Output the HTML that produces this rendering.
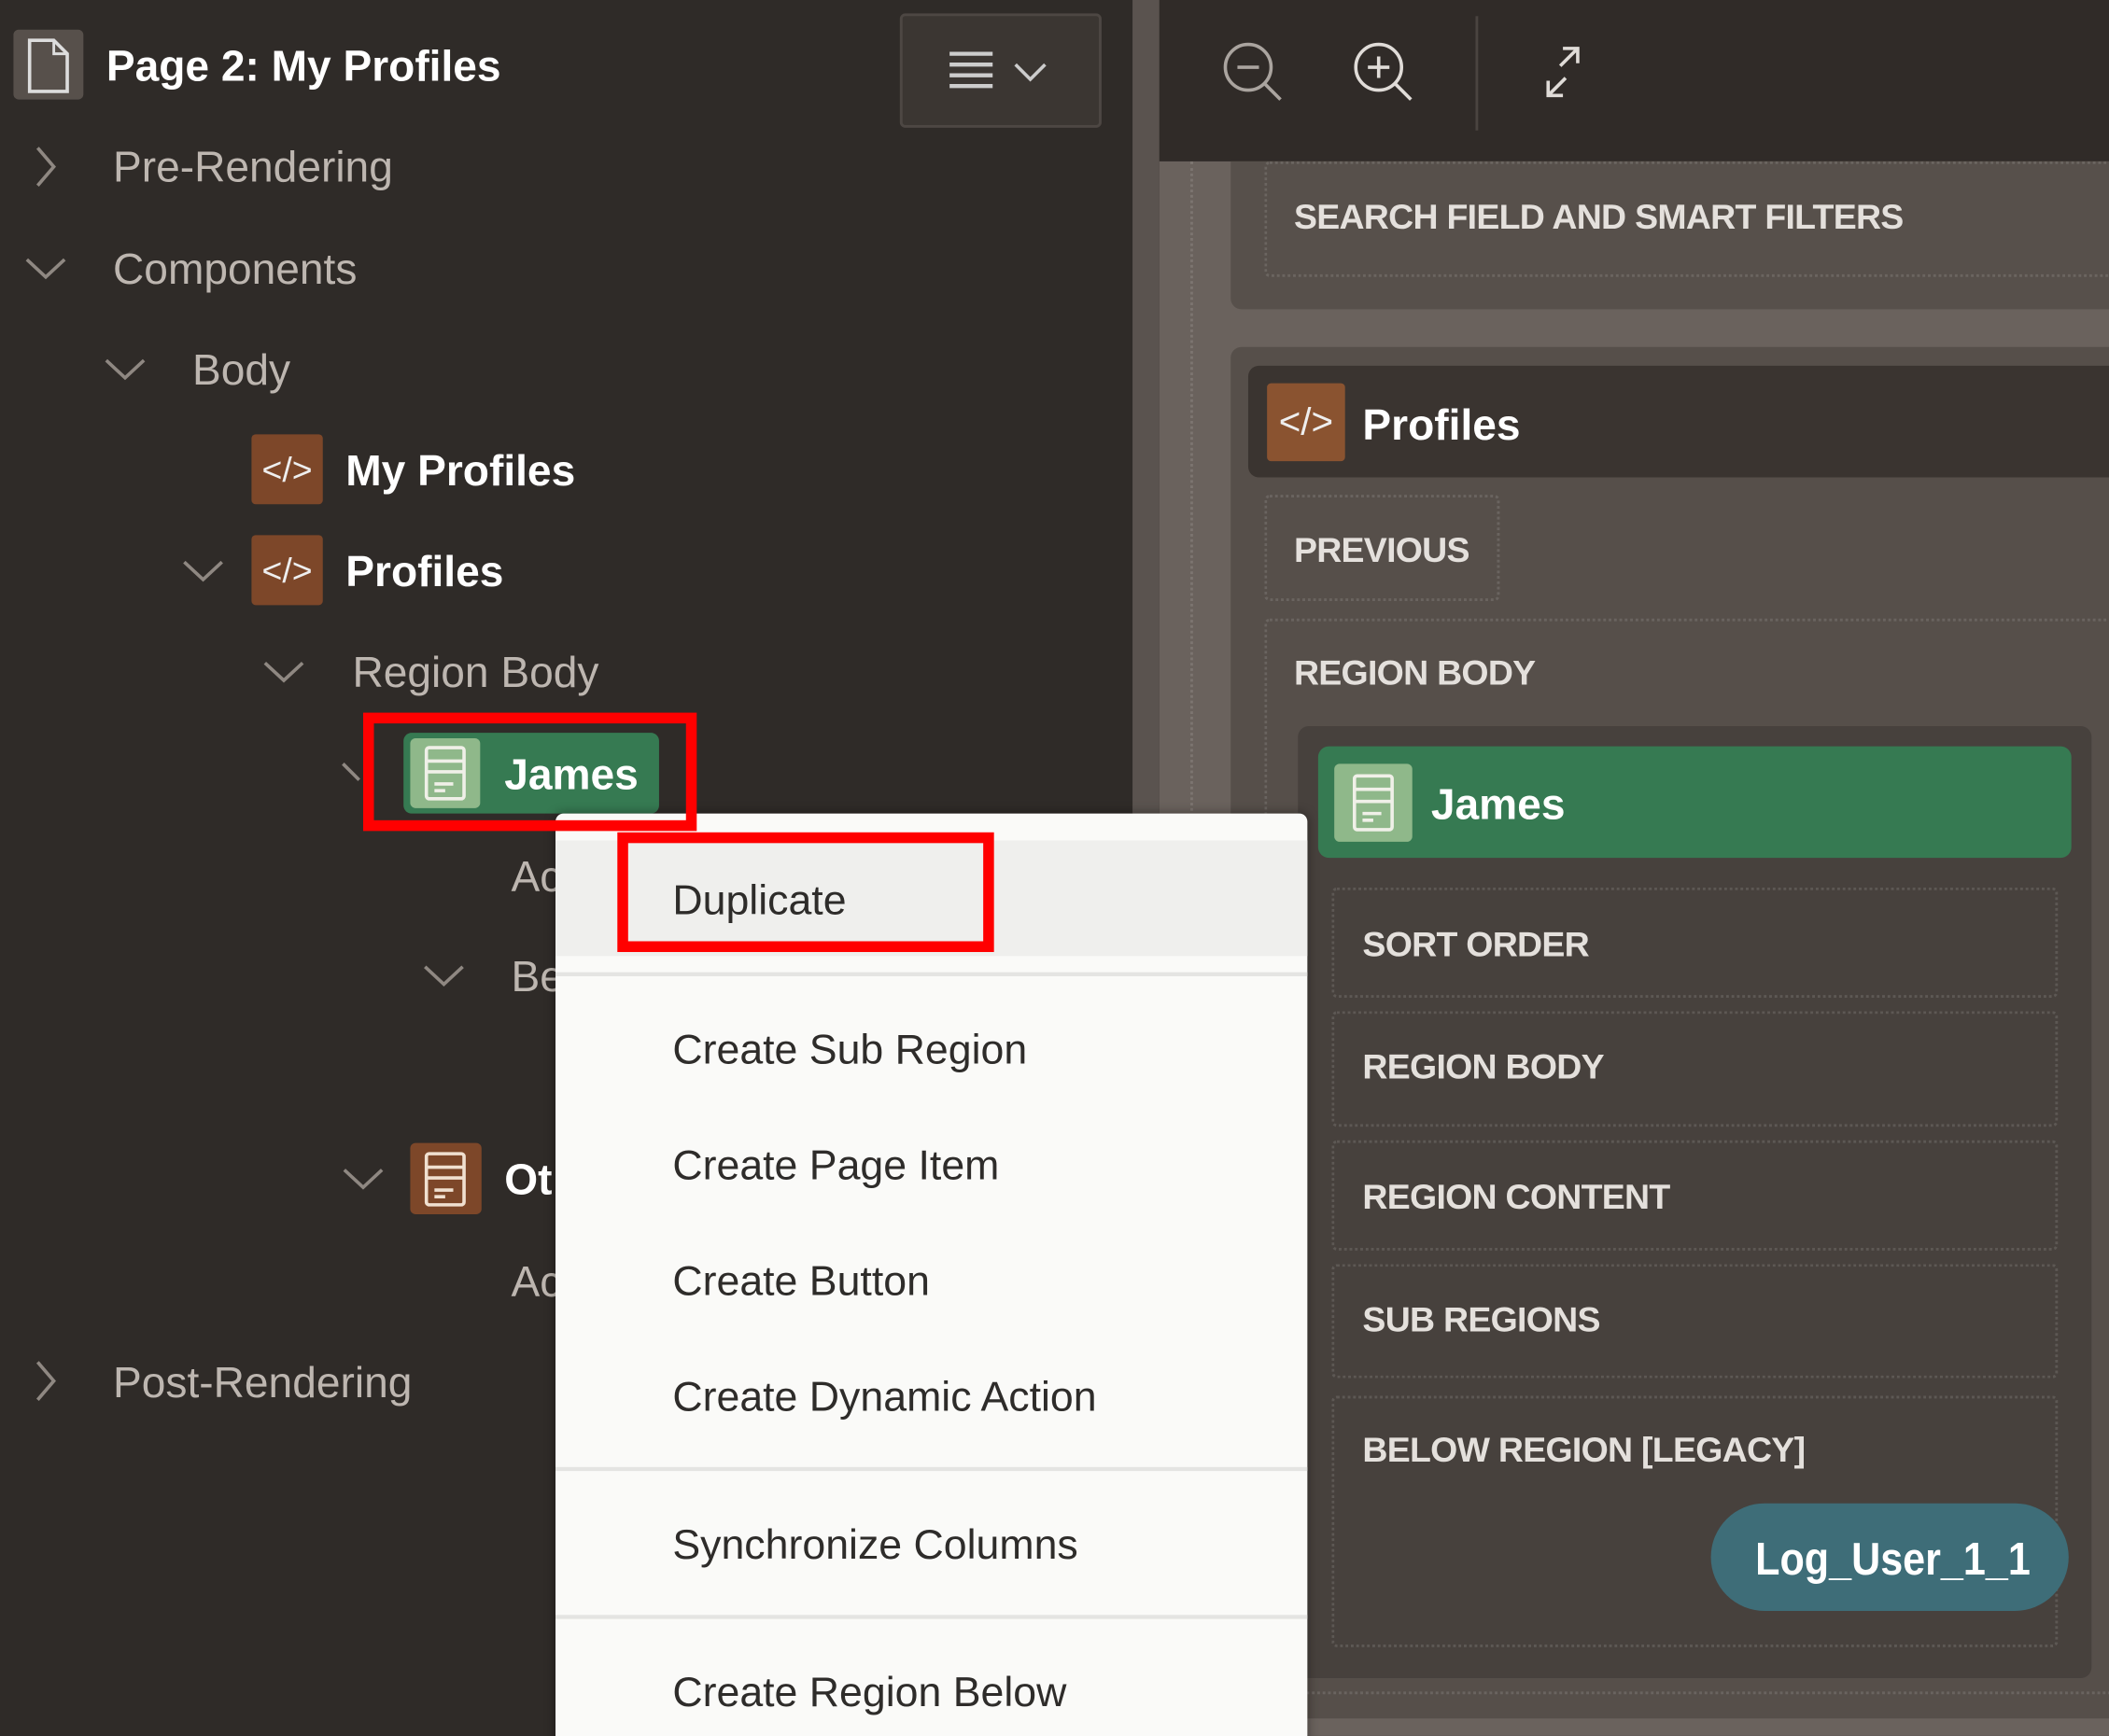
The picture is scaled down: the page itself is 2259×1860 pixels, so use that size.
<!DOCTYPE html>
<html><head><meta charset="utf-8"><style>
*{margin:0;padding:0;box-sizing:border-box}
html,body{width:2259px;height:1860px;overflow:hidden;background:#2f2b28}
#w{position:absolute;left:0;top:0;width:1568px;height:1291px;transform:scale(1.4407);transform-origin:0 0;font-family:"Liberation Sans",sans-serif;overflow:hidden}
.a{position:absolute}
.t{position:absolute;white-space:nowrap;line-height:1;transform-origin:0 50%}
.dot{position:absolute;border:2px dotted rgba(255,255,255,.12);border-radius:4px}
.cap{color:#e4e0dc;font-size:26px;font-weight:bold;letter-spacing:-.5px}
.tree{color:#bdb6b0;font-size:32px}
.mi{color:#2e2c2a;font-size:31px;left:500px}
.sep{position:absolute;left:413px;width:559px;height:3px;background:#e4e4e2}
</style></head><body><div id="w">
<div class="a" style="left:0;top:0;width:842px;height:1291px;background:#2f2b28"></div>
<div class="a" style="left:842px;top:0;width:20px;height:1291px;background:#5a534f"></div>
<div class="a" style="left:10px;top:22px;width:52px;height:52px;background:#57504b;border-radius:4px"></div>
<svg class="a" style="left:18px;top:28px" width="36" height="42" viewBox="0 0 36 42"><path d="M4 2h18l10 10v28H4z" fill="none" stroke="#ddd" stroke-width="2.5"/><path d="M22 2v10h10" fill="none" stroke="#ddd" stroke-width="2"/></svg>
<div class="t" style="left:79px;top:33px;color:#fff;font-size:32px;font-weight:bold">Page 2: My Profiles</div>
<div class="a" style="left:669px;top:10px;width:150px;height:85px;background:#3b3632;border:2px solid #4d4743;border-radius:4px"></div>
<svg class="a" style="left:700px;top:36px" width="85" height="36"><g stroke="#ccc" stroke-width="3"><path d="M6 4h32M6 12h32M6 20h32M6 28h32"/><path d="M55 12l11 11 11-11" fill="none" stroke-width="2.5"/></g></svg>
<svg class="a" style="left:0;top:0" width="842" height="1291"><g fill="none" stroke="#8f8882" stroke-width="2.5">
<path d="M28 110l12 14-12 14"/><path d="M20 193l14 13 14-13"/><path d="M79 268l14 13 14-13"/><path d="M137 418l14 13 14-13"/><path d="M197 493l14 13 14-13"/><path d="M255 568l12 12"/><path d="M316 719l14 13 14-13"/><path d="M256 870l14 13 14-13"/><path d="M28 1013l12 14-12 14"/></g></svg>
<div class="t tree" style="left:84px;top:108px">Pre-Rendering</div>
<div class="t tree" style="left:84px;top:184px">Components</div>
<div class="t tree" style="left:143px;top:259px">Body</div>
<div class="a" style="left:187px;top:323px;width:53px;height:52px;background:#7d4729;border-radius:3px;color:#eee;font-size:26px;text-align:center;line-height:52px">&lt;/&gt;</div>
<div class="t" style="left:257px;top:334px;color:#fff;font-size:32px;font-weight:bold">My Profiles</div>
<div class="a" style="left:187px;top:398px;width:53px;height:52px;background:#7d4729;border-radius:3px;color:#eee;font-size:26px;text-align:center;line-height:52px">&lt;/&gt;</div>
<div class="t" style="left:257px;top:409px;color:#fff;font-size:32px;font-weight:bold">Profiles</div>
<div class="t tree" style="left:262px;top:484px">Region Body</div>
<div class="a" style="left:300px;top:545px;width:190px;height:60px;background:#367a52;border-radius:6px"></div>
<div class="a" style="left:305px;top:549px;width:52px;height:52px;background:#8fb88a;border-radius:4px"></div>
<svg class="a" style="left:313px;top:554px" width="36" height="42"><g fill="none" stroke="#f0f0e8" stroke-width="2.5"><rect x="4" y="2" width="28" height="38" rx="2"/><path d="M4 12h28M4 20h28M10 29h14M10 34h8"/></g></svg>
<div class="t" style="left:375px;top:560px;color:#fff;font-size:32px;font-weight:bold">James</div>
<div class="t tree" style="left:380px;top:636px">Ac</div>
<div class="t tree" style="left:380px;top:710px">Be</div>
<div class="a" style="left:305px;top:850px;width:53px;height:53px;background:#7d4729;border-radius:4px"></div>
<svg class="a" style="left:313px;top:856px" width="36" height="42"><g fill="none" stroke="#f0e0d0" stroke-width="2.5"><rect x="4" y="2" width="28" height="38" rx="2"/><path d="M4 12h28M4 20h28M10 29h14M10 34h8"/></g></svg>
<div class="t" style="left:375px;top:861px;color:#fff;font-size:32px;font-weight:bold">Ot</div>
<div class="t tree" style="left:380px;top:937px">Ac</div>
<div class="t tree" style="left:84px;top:1012px">Post-Rendering</div>
<div class="a" style="left:862px;top:0;width:706px;height:120px;background:#302b28"></div>
<div class="a" style="left:1097px;top:12px;width:2px;height:85px;background:#4a4440"></div>
<svg class="a" style="left:900px;top:25px" width="300" height="60"><g fill="none" stroke="#aaa49f" stroke-width="2.5"><circle cx="28" cy="25" r="17"/><path d="M20 25h16M40 37l12 12"/></g><g fill="none" stroke="#e0dcd8" stroke-width="2.5"><circle cx="125" cy="25" r="17"/><path d="M117 25h16M125 17v16M137 37l12 12"/></g><g fill="none" stroke="#e0dcd8" stroke-width="2.5"><path d="M273 11L260 24M262 11h11v11"/><path d="M251 46L264 33M251 35v11h11"/></g></svg>
<div class="a" style="left:862px;top:120px;width:706px;height:1171px;background:#6a625d"></div>
<div class="a" style="left:885px;top:120px;width:2px;height:1171px;border-left:2px dotted rgba(255,255,255,.12)"></div>
<div class="a" style="left:915px;top:120px;width:653px;height:110px;background:#57504b;border-radius:0 0 0 8px"></div>
<div class="dot" style="left:940px;top:120px;width:640px;height:86px"></div>
<div class="t cap" style="left:962px;top:148px">SEARCH FIELD AND SMART FILTERS</div>
<div class="a" style="left:915px;top:258px;width:653px;height:1020px;background:#564f4a;border-radius:8px 0 0 8px"></div>
<div class="a" style="left:928px;top:272px;width:640px;height:83px;background:#3a3430;border-radius:8px 0 0 8px"></div>
<div class="a" style="left:942px;top:285px;width:58px;height:58px;background:#8a5330;border-radius:3px;color:#eee;font-size:28px;text-align:center;line-height:58px">&lt;/&gt;</div>
<div class="t" style="left:1013px;top:300px;color:#fff;font-size:32px;font-weight:bold">Profiles</div>
<div class="dot" style="left:940px;top:368px;width:175px;height:79px"></div>
<div class="t cap" style="left:962px;top:396px">PREVIOUS</div>
<div class="dot" style="left:940px;top:460px;width:640px;height:800px"></div>
<div class="t cap" style="left:962px;top:487px">REGION BODY</div>
<div class="a" style="left:965px;top:540px;width:590px;height:708px;background:#47413d;border-radius:8px"></div>
<div class="a" style="left:980px;top:555px;width:560px;height:83px;background:#367a52;border-radius:8px"></div>
<div class="a" style="left:992px;top:568px;width:58px;height:58px;background:#8fb88a;border-radius:4px"></div>
<svg class="a" style="left:1003px;top:575px" width="36" height="44"><g fill="none" stroke="#f0f0e8" stroke-width="2.5"><rect x="4" y="2" width="28" height="40" rx="2"/><path d="M4 12h28M4 21h28M10 30h14M10 35h8"/></g></svg>
<div class="t" style="left:1064px;top:582px;color:#fff;font-size:32px;font-weight:bold">James</div>
<div class="dot" style="left:990px;top:660px;width:540px;height:82px"></div>
<div class="t cap" style="left:1013px;top:689px">SORT ORDER</div>
<div class="dot" style="left:990px;top:752px;width:540px;height:86px"></div>
<div class="t cap" style="left:1013px;top:780px">REGION BODY</div>
<div class="dot" style="left:990px;top:848px;width:540px;height:82px"></div>
<div class="t cap" style="left:1013px;top:877px">REGION CONTENT</div>
<div class="dot" style="left:990px;top:940px;width:540px;height:85px"></div>
<div class="t cap" style="left:1013px;top:968px">SUB REGIONS</div>
<div class="dot" style="left:990px;top:1038px;width:540px;height:187px"></div>
<div class="t cap" style="left:1013px;top:1065px">BELOW REGION [LEGACY]</div>
<div class="a" style="left:1272px;top:1118px;width:266px;height:80px;background:#3e6d78;border-radius:40px"></div>
<div class="t" style="left:1305px;top:1143px;color:#fff;font-size:34px;font-weight:bold;transform:scaleX(.88)">Log_User_1_1</div>
<div class="a" style="left:413px;top:605px;width:559px;height:700px;background:#fafaf8;border-radius:6px 6px 0 0;box-shadow:0 0 8px rgba(0,0,0,.4)"></div>
<div class="a" style="left:413px;top:625px;width:559px;height:86px;background:#efefed"></div>
<div class="sep" style="top:723px"></div>
<div class="sep" style="top:1091px"></div>
<div class="sep" style="top:1201px"></div>
<div class="t mi" style="top:654px">Duplicate</div>
<div class="t mi" style="top:765px">Create Sub Region</div>
<div class="t mi" style="top:851px">Create Page Item</div>
<div class="t mi" style="top:937px">Create Button</div>
<div class="t mi" style="top:1023px">Create Dynamic Action</div>
<div class="t mi" style="top:1133px">Synchronize Columns</div>
<div class="t mi" style="top:1243px">Create Region Below</div>
<div class="a" style="left:270px;top:530px;width:248px;height:88px;border:8px solid #f00"></div>
<div class="a" style="left:459px;top:619px;width:280px;height:89px;border:8px solid #f00"></div>
</div></body></html>
